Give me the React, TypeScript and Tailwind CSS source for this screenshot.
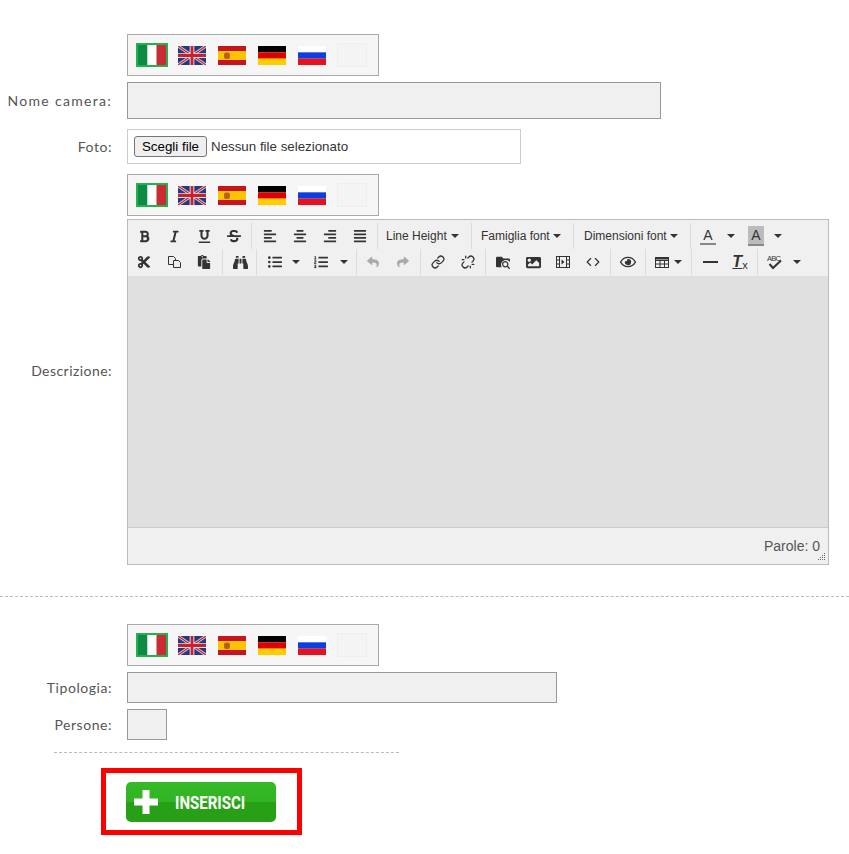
import * as React from "react";
import {
    FaAlignCenter, FaAlignJustify, FaAlignLeft, FaAlignRight, FaBinoculars, FaBold, FaCut, FaImage,
    FaItalic, FaListOl, FaListUl, FaPaste, FaRegEye, FaReply, FaSearch, FaFolder, FaShare, FaStrikethrough,
    FaUnderline,
} from "react-icons/fa";
import { Code, Link, Unlink } from "lucide-react";

function FormRow({ label, children, className = "", labelClass = "tracking-[0.55px]", alignClass = "items-center" }: {
    label?: string;
    children: React.ReactNode;
    className?: string;
    labelClass?: string;
    alignClass?: string;
}) {
    return (
        <div className={`grid grid-cols-[112px_1fr] gap-x-[15px] ${alignClass} ${className}`}>
            <div className={`text-right text-[14px] text-[#555] font-['Lato','Open_Sans',sans-serif] ${labelClass}`}>{label}</div>
            <div>{children}</div>
        </div>
    );
}

function Italy() {
    return (
        <svg width="28" height="20" viewBox="0 0 3 2" preserveAspectRatio="none">
            <rect width="1" height="2" fill="#0f8a46" />
            <rect x="1" width="1" height="2" fill="#fff" />
            <rect x="2" width="1" height="2" fill="#cd2a36" />
        </svg>
    );
}

function Uk() {
    return (
        <svg width="28" height="19" viewBox="0 0 60 40" preserveAspectRatio="none">
            <rect width="60" height="40" fill="#27387f" />
            <path d="M0 0L60 40M60 0L0 40" stroke="#d9d9e6" strokeWidth="6" />
            <path d="M0 0L60 40M60 0L0 40" stroke="#c8202f" strokeWidth="2.5" />
            <path d="M30 0V40M0 20H60" stroke="#e8e0e0" strokeWidth="10" />
            <path d="M30 0V40M0 20H60" stroke="#c8202f" strokeWidth="6" />
        </svg>
    );
}

function Spain() {
    return (
        <svg width="28" height="19" viewBox="0 0 28 19">
            <rect width="28" height="19" fill="#c8141e" />
            <rect y="5" width="28" height="9" fill="#fbc400" />
            <rect x="6" y="6.5" width="6" height="6.500" rx="2" fill="#b5651d" />
            <rect x="8" y="8" width="2.500" height="3.500" fill="#c8501e" />
        </svg>
    );
}

function Germany() {
    return (
        <svg width="28" height="19" viewBox="0 0 3 3" preserveAspectRatio="none">
            <rect width="3" height="1" fill="#000" />
            <rect y="1" width="3" height="1" fill="#dd0000" />
            <rect y="2" width="3" height="1" fill="#ffce00" />
        </svg>
    );
}

function Russia() {
    return (
        <svg width="28" height="19" viewBox="0 0 3 3" preserveAspectRatio="none">
            <rect width="3" height="1" fill="#fff" />
            <rect y="1" width="3" height="1" fill="#0d3fe0" />
            <rect y="2" width="3" height="1" fill="#e8101c" />
        </svg>
    );
}

function FlagBar() {
    return (
        <FormRow>
            <div className="h-[42px] w-[252px] border border-[#aaa] bg-[#f6f6f6] flex items-center pl-[8px]">
                <div className="w-[32px] h-[24px] bg-[#22b14c] flex items-center justify-center">
                    <div className="w-[28px] h-[20px] overflow-hidden"><Italy /></div>
                </div>
                <div className="ml-[10px]"><Uk /></div>
                <div className="ml-[12px]"><Spain /></div>
                <div className="ml-[12px]"><Germany /></div>
                <div className="ml-[12px]"><Russia /></div>
                <div className="ml-[11px] w-[30px] h-[24px] border border-[#eeeeee] bg-[#f4f4f4]" />
            </div>
        </FormRow>
    );
}

function Btn({ children, w = "w-[30px]", muted = false }: { children: React.ReactNode; w?: string; muted?: boolean }) {
    return (
        <div className={`${w} h-[26px] flex items-center justify-center ${muted ? "text-[#aaa]" : "text-[#333]"}`}>
            {children}
        </div>
    );
}

function Caret({ className = "" }: { className?: string }) {
    return <span className={`inline-block w-0 h-0 border-x-[4px] border-x-transparent border-t-[4px] border-t-[#333] ${className}`} />;
}

function Sep({ className = "mx-[2px]" }: { className?: string }) {
    return <div className={`w-px h-[26px] bg-[#dcdcdc] ${className}`} />;
}

function TextBtn({ label, className }: { label: string; className: string }) {
    return (
        <div className={`h-[26px] flex items-center justify-between text-[12px] text-[#333] ${className}`}>
            <span>{label}</span>
            <Caret />
        </div>
    );
}

function CopyIcon() {
    return (
        <svg width="15" height="14" viewBox="0 0 15 14" fill="#f0f0f0" stroke="#333" strokeWidth="1">
            <path d="M1.500 1.500h5l2 2v6h-7z" />
            <path d="M6.500 5.500h5l2 2v5h-7z" />
        </svg>
    );
}

function FilmIcon() {
    return (
        <svg width="14" height="12" viewBox="0 0 14 12" fill="none" stroke="#333" strokeWidth="1">
            <rect x="0.500" y="0.500" width="13" height="11" />
            <path d="M3.500 0.500v11M10.500 0.500v11M0.500 4h3M0.500 8h3M10.500 4h3M10.500 8h3" />
            <path d="M5.500 3.500l3 2.500-3 2.500z" fill="#333" stroke="none" />
        </svg>
    );
}

function TableIcon() {
    return (
        <svg width="14" height="11" viewBox="0 0 14 11" fill="none" stroke="#333" strokeWidth="1">
            <rect x="0.500" y="0.500" width="13" height="10" />
            <path d="M0.500 3.500h13M0.500 7h13M5 3.500v7M9.500 3.500v7" />
            <path d="M0.500 1.500h13" strokeWidth="2" />
        </svg>
    );
}

function SpellIcon() {
    return (
        <svg width="18" height="18" viewBox="0 0 18 18">
            <text x="1" y="8" fontSize="7.500" fill="#333" fontFamily="Liberation Sans, sans-serif" textLength="14">ABC</text>
            <path d="M3.500 11l3.500 4 8-7.500" fill="none" stroke="#333" strokeWidth="2" />
        </svg>
    );
}

function Toolbar() {
    return (
        <div className="h-[57px] bg-[#f0f0f0] border-b border-[#ddd] pl-px pt-[3px] font-['Liberation_Sans',Arial,sans-serif]">
            <div className="flex items-center h-[26px]">
                <Btn><FaBold size={13} /></Btn>
                <Btn><FaItalic size={13} /></Btn>
                <Btn><FaUnderline size={13} /></Btn>
                <Btn><FaStrikethrough size={14} /></Btn>
                <Sep className="ml-[2px] mr-[3px]" />
                <Btn><FaAlignLeft size={14} /></Btn>
                <Btn><FaAlignCenter size={14} /></Btn>
                <Btn><FaAlignRight size={14} /></Btn>
                <Btn><FaAlignJustify size={14} /></Btn>
                <Sep className="ml-[2px] mr-[8px]" />
                <TextBtn label="Line Height" className="w-[73px]" />
                <Sep className="ml-[12px] mr-[9px]" />
                <TextBtn label="Famiglia font" className="w-[80px]" />
                <Sep className="ml-[12px] mr-[10px]" />
                <TextBtn label="Dimensioni font" className="w-[94px]" />
                <Sep className="ml-[12px] mr-[7px]" />
                <div className="w-[20px] h-[26px] flex flex-col items-center justify-center">
                    <span className="text-[14px] leading-[15px] text-[#333] border-b-2 border-[#888] px-[3px]">A</span>
                </div>
                <Caret className="ml-[9px]" />
                <div className="ml-[13px] w-[16px] h-[20px] bg-[#bbb] border-b-2 border-[#888] flex items-center justify-center text-[14px] text-[#333]">A</div>
                <Caret className="ml-[10px]" />
            </div>
            <div className="flex items-center h-[26px]">
                <Btn><FaCut size={14} /></Btn>
                <Btn><CopyIcon /></Btn>
                <Btn><FaPaste size={14} /></Btn>
                <Sep className="ml-[3px] mr-[2px]" />
                <Btn><FaBinoculars size={15} /></Btn>
                <Sep className="ml-px mr-[3px]" />
                <Btn><FaListUl size={14} /></Btn>
                <Caret className="ml-[2px]" />
                <div className="w-[6px]" />
                <Btn><FaListOl size={14} /></Btn>
                <Caret className="ml-[4px]" />
                <Sep className="ml-[8px] mr-px" />
                <Btn muted><FaReply size={12} /></Btn>
                <Btn muted><FaShare size={12} /></Btn>
                <Sep className="ml-[2px] mr-[2px]" />
                <Btn><Link size={14} strokeWidth={2.2} /></Btn>
                <Btn><Unlink size={14} strokeWidth={2.2} /></Btn>
                <Sep className="ml-[2px] mr-[2px]" />
                <Btn>
                    <span className="relative inline-block w-[14px] h-[14px]">
                        <FaFolder size={14} />
                        <span className="absolute right-[-1px] bottom-[-1px] bg-[#f0f0f0] rounded-full p-px"><FaSearch size={8} /></span>
                    </span>
                </Btn>
                <Btn><FaImage size={15} /></Btn>
                <Btn><FilmIcon /></Btn>
                <Btn><Code size={14} strokeWidth={2} /></Btn>
                <Sep className="ml-[2px] mr-[2px]" />
                <Btn><FaRegEye size={16} /></Btn>
                <Sep className="ml-[2px] mr-[9px]" />
                <Btn w="w-[14px]"><TableIcon /></Btn>
                <Caret className="ml-[5px]" />
                <Sep className="ml-[9px] mr-[3px]" />
                <Btn><div className="w-[15px] h-[2px] bg-[#333]" /></Btn>
                <Btn>
                    <span className="font-bold italic text-[16px] underline leading-none">T</span>
                    <span className="text-[11px] mt-[6px] leading-none">x</span>
                </Btn>
                <Sep className="ml-[2px] mr-[2px]" />
                <Btn><SpellIcon /></Btn>
                <Caret className="ml-[3px]" />
            </div>
        </div>
    );
}

function Editor() {
    return (
        <div className="h-[346px] w-[702px] border border-[#bbb] flex flex-col">
            <Toolbar />
            <div className="flex-1 bg-[#e0e0e0]" />
            <div className="relative h-[37px] bg-[#f0f0f0] border-t border-[#ccc] flex items-end justify-end pr-[8px] pb-[10px] text-[14px] leading-[16px] text-[#555] font-['Liberation_Sans',Arial,sans-serif]">
                Parole: 0
                <svg className="absolute right-[2px] bottom-[2px]" width="10" height="10" viewBox="0 0 10 10">
                    <path d="M8 1h1v1H8zM6 3h1v1H6zM8 3h1v1H8zM4 5h1v1H4zM6 5h1v1H6zM8 5h1v1H8zM2 7h1v1H2zM4 7h1v1H4zM6 7h1v1H6zM8 7h1v1H8z" fill="#666" />
                </svg>
            </div>
        </div>
    );
}

export default function App() {
    return (
        <div className="bg-white min-h-[854px] pt-[34px] overflow-hidden">
            <FlagBar />

            <FormRow label="Nome camera:" className="mt-[6px]" labelClass="tracking-[1.3px]">
                <div className="h-[37px] w-[534px] border border-[#999] bg-[#f0f0f0]" />
            </FormRow>

            <FormRow label="Foto:" className="mt-[10px]">
                <div className="h-[35px] w-[394px] border border-[#ccc] flex items-center pl-[6px] text-[13.33px] text-[#333] font-['Liberation_Sans',Arial,sans-serif]">
                    <div className="h-[21px] w-[73px] border border-[#767676] rounded-[3px] bg-[#efefef] text-[#000] flex items-center justify-center">Scegli file</div>
                    <span className="ml-[4px]">Nessun file selezionato</span>
                </div>
            </FormRow>

            <div className="mt-[10px]"><FlagBar /></div>

            <FormRow label="Descrizione:" className="mt-[3px]" labelClass="tracking-[0.45px] pt-[141px]" alignClass="items-start">
                <Editor />
            </FormRow>

            <div className="mt-[31px] border-t border-dashed border-[#bbb]" />

            <div className="mt-[27px]"><FlagBar /></div>

            <FormRow label="Tipologia:" className="mt-[6px]">
                <div className="h-[31px] w-[430px] border border-[#999] bg-[#f0f0f0]" />
            </FormRow>

            <FormRow label="Persone:" className="mt-[6px]">
                <div className="h-[31px] w-[40px] border border-[#999] bg-[#f0f0f0]" />
            </FormRow>

            <div className="mt-[12px] ml-[54px] w-[345px] border-t border-dashed border-[#bbb]" />

            <div className="mt-[15px] ml-[101px] w-[201px] h-[67px] border-[5px] border-[#ff0000] pl-[20px] pt-[9px]">
                <div className="w-[150px] h-[40px] rounded-[5px] bg-[linear-gradient(to_bottom,#36ba27_0%,#31b322_50%,#27a017_50%,#27a017_100%)] flex items-center pl-[8px] text-white">
                    <svg width="24" height="24" viewBox="0 0 24 24" fill="#fff">
                        <path d="M8.500 0h7v8.500H24v7h-8.500V24h-7v-8.500H0v-7h8.500z" />
                    </svg>
                    <span className="ml-[17px] text-[18px] font-bold origin-left scale-x-[0.835] whitespace-nowrap font-['Roboto',sans-serif]">INSERISCI</span>
                </div>
            </div>
        </div>
    );
}
